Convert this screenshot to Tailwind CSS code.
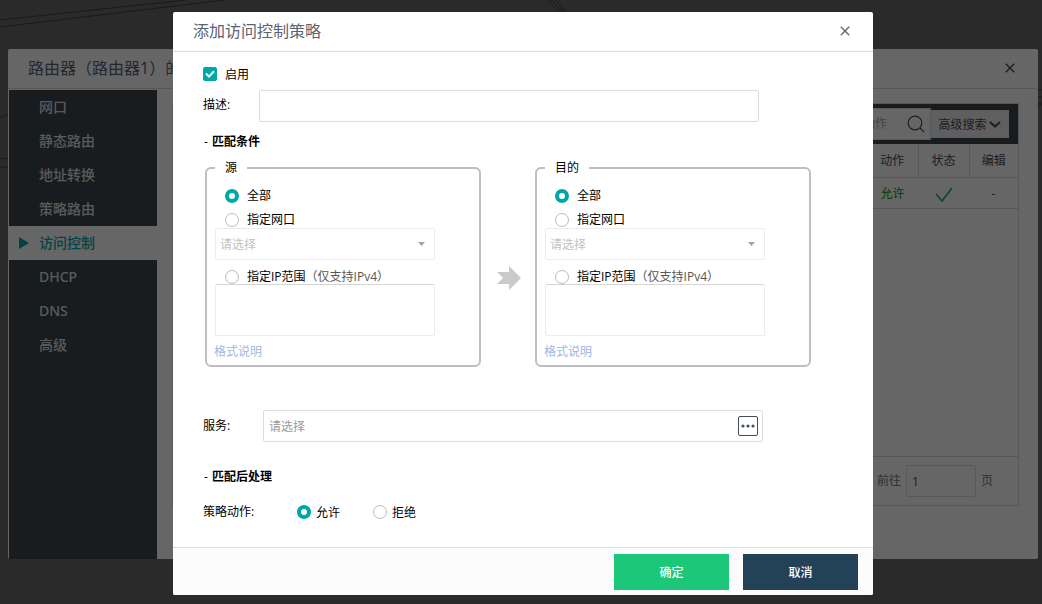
<!DOCTYPE html>
<html lang="zh-CN">
<head>
<meta charset="utf-8">
<meta name="viewport" content="width=device-width, initial-scale=1">
<title>添加访问控制策略</title>
<script src="https://cdn.jsdelivr.net/npm/@tailwindcss/browser@4"></script>
</head>
<body class="relative h-screen overflow-hidden bg-[#696969] font-['Open_Sans','Noto_Sans_CJK_SC',sans-serif] text-xs text-black">

<!-- Topology canvas links -->
<svg class="absolute inset-0 h-full w-full" fill="none" stroke="#404040" stroke-width="1" aria-hidden="true">
  <path d="M0 20 186 0M0 27 225 0M0 118 10 114M0 159 10 158M0 167H10M547 0 559 12M551 0 563 12M555 0 566 12M1036 90H1042M1036 97H1042M1036 103H1042M1036 105H1042"/>
</svg>

<!-- Router settings window -->
<section class="absolute top-[49px] right-1 bottom-[45px] left-2 flex flex-col overflow-hidden rounded-xs bg-white">
  <header class="flex h-10 shrink-0 items-center justify-between border-b border-[#d9dadb] pr-[23px] pb-px pl-5">
    <h1 class="text-base text-[#5c6273]">路由器（路由器1）的</h1>
    <button type="button" aria-label="关闭" class="text-[#464c5b]">
      <svg class="size-[10px]" viewBox="0 0 10 10" fill="none" stroke="currentColor" stroke-width="1.4"><path d="M.8.8 9.2 9.2M9.2.8.8 9.2"/></svg>
    </button>
  </header>
  <div class="flex min-h-0 flex-1 pt-px pl-px">
    <nav class="w-[148px] shrink-0 bg-[#3c464c] text-sm font-medium text-[#dfe1e2]">
      <a href="#" class="flex h-[34px] items-center pl-[30px]">网口</a>
      <a href="#" class="flex h-[34px] items-center pl-[30px]">静态路由</a>
      <a href="#" class="flex h-[34px] items-center pl-[30px]">地址转换</a>
      <a href="#" class="flex h-[34px] items-center pl-[30px]">策略路由</a>
      <a href="#" aria-current="page" class="flex h-[34px] items-center gap-[10px] bg-white pl-[10px] text-[#00a7a7]">
        <svg class="h-3 w-[10px]" viewBox="0 0 10 12" fill="currentColor"><path d="M0 0 10 6 0 12z"/></svg>访问控制</a>
      <a href="#" class="flex h-[34px] items-center pl-[30px] font-['Noto_Sans',sans-serif]">DHCP</a>
      <a href="#" class="flex h-[34px] items-center pl-[30px] font-['Noto_Sans',sans-serif]">DNS</a>
      <a href="#" class="flex h-[34px] items-center pl-[30px]">高级</a>
    </nav>
    <main class="mt-[13px] mr-[19px] mb-[53px] ml-[15px] flex flex-1 flex-col border border-[#d9dadb]">
      <div class="flex h-10 shrink-0 items-center justify-end bg-[#3c464c] pr-[9px]">
        <div class="flex h-8 w-[88px] items-center border border-[#d7dde4] bg-white pr-[5px]">
          <input type="text" aria-label="搜索" placeholder="动作" class="min-w-0 flex-1 pl-[19px] placeholder:text-[#aaadb4]">
          <svg class="size-[18px] text-[#464c5b]" viewBox="0 0 18 18" fill="none" stroke="currentColor" stroke-width="1.2"><circle cx="8" cy="8" r="6.8"/><path d="m13 13 4.2 4.2"/></svg>
        </div>
        <button type="button" class="flex h-7 w-[78px] items-center justify-center gap-0.5 bg-[#ededed] pt-px pr-px text-[#464c5b]">高级搜索
          <svg class="h-[7px] w-3" viewBox="0 0 12 7" fill="none" stroke="currentColor" stroke-width="2"><path d="m1 1 5 4.6L11 1"/></svg>
        </button>
      </div>
      <table class="w-full shrink-0 table-fixed border-collapse text-center text-[#464c5b]">
        <colgroup><col><col class="w-[51px]"><col class="w-[51px]"><col class="w-[49px]"></colgroup>
        <thead>
          <tr class="h-[33px] border-b border-[#d9dadb]">
            <td></td>
            <th scope="col" class="border-r border-[#d9dadb] pt-0.5 font-normal">动作</th>
            <th scope="col" class="border-r border-[#d9dadb] pt-0.5 font-normal">状态</th>
            <th scope="col" class="pt-0.5 font-normal">编辑</th>
          </tr>
        </thead>
        <tbody>
          <tr class="h-[31px] border-b border-[#d9dadb]">
            <td></td>
            <td class="pt-0.5 text-[#009b00]">允许</td>
            <td class="pt-1"><svg class="mx-auto h-[15px] w-[18px]" viewBox="0 0 18 15" fill="none" stroke="#19be6b" stroke-width="1.8" role="img" aria-label="启用"><path d="m1 7 6 7L17 1"/></svg></td>
            <td class="pt-0.5">-</td>
          </tr>
        </tbody>
      </table>
      <footer class="mt-auto flex h-[49px] shrink-0 items-center justify-end gap-[5px] border-t border-[#d9dadb] pr-[25px] text-[#7a7d84]">
        <label for="page">前往</label>
        <input id="page" type="text" value="1" class="h-8 w-[70px] rounded-xs border border-[#dddee1] px-[5px] text-[#495060]">
        <span>页</span>
      </footer>
    </main>
  </div>
</section>

<!-- Dialog over the dimmed page -->
<div class="absolute inset-0 flex items-start justify-center bg-black/60 pt-3 pl-1">
  <form role="dialog" aria-labelledby="dlg" class="flex w-[700px] flex-col overflow-hidden rounded-xs bg-white">
    <header class="flex h-10 items-center justify-between border-b border-[#dcdcdc] pr-[23px] pb-px pl-5">
      <h2 id="dlg" class="text-base text-[#5c6273]">添加访问控制策略</h2>
      <button type="button" aria-label="关闭" class="text-[#5f6778]">
        <svg class="size-[10px]" viewBox="0 0 10 10" fill="none" stroke="currentColor" stroke-width="1.4"><path d="M.8.8 9.2 9.2M9.2.8.8 9.2"/></svg>
      </button>
    </header>

    <div class="px-[30px] pt-[14px] pb-[27px]">
      <label class="flex h-4 items-center gap-2">
        <span class="relative flex size-[14px]">
          <input type="checkbox" checked class="peer size-[14px] appearance-none rounded-xs border border-[#bbb] checked:border-[#00a7a7] checked:bg-[#00a7a7]">
          <svg class="pointer-events-none absolute inset-0 hidden size-[14px] peer-checked:block" viewBox="0 0 14 14" fill="none" stroke="#fff" stroke-width="2"><path d="M3 6.5 6 9.6 11 4.2"/></svg>
        </span><span class="pt-px">启用</span>
      </label>

      <div class="mt-2 flex">
        <label for="desc" class="w-14 pt-[7px] leading-4">描述:</label>
        <input id="desc" type="text" class="h-8 w-[500px] rounded-xs border border-[#dcdcdc] px-[5px]">
      </div>

      <h3 class="mt-3 flex gap-1 pl-px leading-4 font-bold"><span class="font-normal">-</span>匹配条件</h3>

      <div class="mt-[10px] ml-0.5 flex items-center">
        <fieldset class="h-[207px] w-[276px] rounded-md border-2 border-[#bfbfbf] px-2">
          <legend class="px-[10px] leading-4">源</legend>
          <label class="mt-[13px] flex h-[14px] items-center gap-2 pl-[10px]">
            <input type="radio" name="src" checked class="size-[14px] appearance-none rounded-full border border-[#bbb] checked:border-4 checked:border-[#00a7a7]">全部</label>
          <label class="mt-[9px] flex h-4 items-center gap-2 pl-[10px]">
            <input type="radio" name="src" class="size-[14px] appearance-none rounded-full border border-[#bbb] checked:border-4 checked:border-[#00a7a7]"><span class="pb-px">指定网口</span></label>
          <div class="relative w-[220px]">
            <select aria-label="源网口" class="block h-8 w-full appearance-none rounded-xs border border-[#ececec] pt-px pl-1 text-[#c2c2c2]"><option>请选择</option></select>
            <svg class="pointer-events-none absolute top-[14px] right-[10px] h-1 w-[7px]" viewBox="0 0 7 4" fill="#9ea4b0"><path d="M0 0h7L3.5 4z"/></svg>
          </div>
          <label class="mt-[10px] flex h-[14px] items-center gap-2 pl-[10px]">
            <input type="radio" name="src" class="size-[14px] appearance-none rounded-full border border-[#bbb] checked:border-4 checked:border-[#00a7a7]"><span class="pb-px">指定IP范围<span class="text-[#555]">（仅支持IPv4）</span></span></label>
          <textarea aria-label="源IP范围" class="block h-[52px] w-[220px] resize-none rounded-xs border border-[#ececec] border-t-[#d5d5d5] px-[5px]"></textarea>
          <a href="#" class="-ml-px mt-2 block leading-4 text-[#9bb7e3]">格式说明</a>
        </fieldset>

        <svg class="mt-[29px] mr-[14px] ml-4 h-6 w-6 shrink-0" viewBox="0 0 24 24" fill="#cacaca" aria-hidden="true"><path d="M0 6H12V0L24 12 12 24V18H0L6 12z"/></svg>

        <fieldset class="h-[207px] w-[276px] rounded-md border-2 border-[#bfbfbf] px-2">
          <legend class="px-[10px] leading-4">目的</legend>
          <label class="mt-[13px] flex h-[14px] items-center gap-2 pl-[10px]">
            <input type="radio" name="dst" checked class="size-[14px] appearance-none rounded-full border border-[#bbb] checked:border-4 checked:border-[#00a7a7]">全部</label>
          <label class="mt-[9px] flex h-4 items-center gap-2 pl-[10px]">
            <input type="radio" name="dst" class="size-[14px] appearance-none rounded-full border border-[#bbb] checked:border-4 checked:border-[#00a7a7]"><span class="pb-px">指定网口</span></label>
          <div class="relative w-[220px]">
            <select aria-label="目的网口" class="block h-8 w-full appearance-none rounded-xs border border-[#ececec] pt-px pl-1 text-[#c2c2c2]"><option>请选择</option></select>
            <svg class="pointer-events-none absolute top-[14px] right-[10px] h-1 w-[7px]" viewBox="0 0 7 4" fill="#9ea4b0"><path d="M0 0h7L3.5 4z"/></svg>
          </div>
          <label class="mt-[10px] flex h-[14px] items-center gap-2 pl-[10px]">
            <input type="radio" name="dst" class="size-[14px] appearance-none rounded-full border border-[#bbb] checked:border-4 checked:border-[#00a7a7]"><span class="pb-px">指定IP范围<span class="text-[#555]">（仅支持IPv4）</span></span></label>
          <textarea aria-label="目的IP范围" class="block h-[52px] w-[220px] resize-none rounded-xs border border-[#ececec] border-t-[#d5d5d5] px-[5px]"></textarea>
          <a href="#" class="-ml-px mt-2 block leading-4 text-[#9bb7e3]">格式说明</a>
        </fieldset>
      </div>

      <div class="mt-[43px] flex items-center">
        <label for="svc" class="w-[60px]">服务:</label>
        <div class="flex h-8 w-[500px] items-center rounded-xs border border-[#dcdcdc] pr-1">
          <input id="svc" type="text" placeholder="请选择" class="min-w-0 flex-1 pt-0.5 pl-[5px] placeholder:text-[#999]">
          <button type="button" aria-label="选择服务" class="flex size-5 items-center justify-center rounded-xs border border-[#464c5b]">
            <svg class="h-1 w-[14px]" viewBox="0 0 14 4" fill="#464c5b"><circle cx="2" cy="2" r="1.6"/><circle cx="7" cy="2" r="1.6"/><circle cx="12" cy="2" r="1.6"/></svg>
          </button>
        </div>
      </div>

      <h3 class="mt-[27px] flex gap-1 pl-px leading-4 font-bold"><span class="font-normal">-</span>匹配后处理</h3>

      <div class="mt-[19px] flex h-4 items-center" role="radiogroup" aria-labelledby="act">
        <span id="act" class="w-[94px]">策略动作:</span>
        <label class="flex w-[76px] items-center gap-[5px]"><input type="radio" name="act" checked class="size-[14px] appearance-none rounded-full border border-[#bbb] checked:border-4 checked:border-[#00a7a7]"><span class="pt-0.5">允许</span></label>
        <label class="flex items-center gap-[5px]"><input type="radio" name="act" class="size-[14px] appearance-none rounded-full border border-[#bbb] checked:border-4 checked:border-[#00a7a7]"><span class="pt-0.5">拒绝</span></label>
      </div>
    </div>

    <footer class="flex h-12 items-center justify-end gap-[14px] border-t border-[#dcdcdc] bg-[#fcfcfd] pr-[15px]">
      <button type="submit" class="h-9 w-[115px] bg-[#1dc779] pt-0.5 font-medium text-white">确定</button>
      <button type="button" class="h-9 w-[115px] bg-[#234157] pt-0.5 font-medium text-white">取消</button>
    </footer>
  </form>
</div>
</body>
</html>
